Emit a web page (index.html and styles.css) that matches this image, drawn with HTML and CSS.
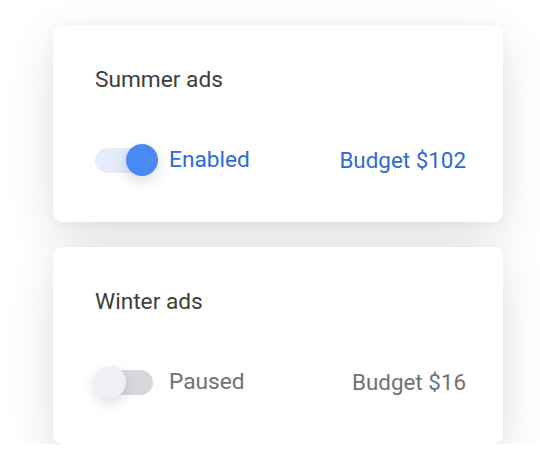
FILE: index.html
```html
<!DOCTYPE html>
<html>
<head>
<meta charset="utf-8">
<link rel="stylesheet" href="styles.css">
</head>
<body>
<div class="list">
  <div class="card">
    <div class="title">Summer ads</div>
    <div class="row">
      <div class="status on">
        <span class="toggle on"><span class="knob"></span></span>
        <span class="label">Enabled</span>
      </div>
      <span class="budget on">Budget $102</span>
    </div>
  </div>
  <div class="card">
    <div class="title">Winter ads</div>
    <div class="row">
      <div class="status off">
        <span class="toggle off"><span class="knob"></span></span>
        <span class="label">Paused</span>
      </div>
      <span class="budget off">Budget $16</span>
    </div>
  </div>
</div>
</body>
</html>
```

FILE: styles.css
```css
html, body {
  margin: 0;
  padding: 0;
  background: #ffffff;
  font-family: Roboto, "Noto Sans", sans-serif;
}
.list {
  display: flex;
  flex-direction: column;
  gap: 25px;
  width: 450px;
  margin-left: 53px;
  padding-top: 25px;
}
.card {
  background: #ffffff;
  border-radius: 9px;
  box-shadow: 0 16px 50px rgba(0, 0, 0, 0.12), 0 2px 12px rgba(0, 0, 0, 0.03);
  padding: 40px 37px 46px 42px;
}
.title {
  font-size: 22.7px;
  line-height: 30px;
  color: #3d3d3d;
}
.row {
  margin-top: 49px;
  height: 32px;
  display: flex;
  align-items: center;
  justify-content: space-between;
}
.status {
  display: flex;
  align-items: center;
  gap: 16px;
}
.label {
  font-size: 22.7px;
  line-height: 32px;
}
.budget {
  font-size: 22.4px;
  line-height: 32px;
}
.on { color: #2b6ad8; }
.off { color: #6d7277; }
.toggle {
  position: relative;
  display: block;
  width: 58px;
  height: 25px;
  border-radius: 13px;
}
.toggle.on { background: linear-gradient(90deg, #e6edfb, #dfe8fb); }
.toggle.off { background: #d6d8dd; }
.knob {
  position: absolute;
  top: -4px;
  width: 32px;
  height: 32px;
  border-radius: 50%;
}
.toggle.on .knob {
  left: 31px;
  background: #4a89f3;
  box-shadow: 0 5px 14px rgba(0, 0, 0, 0.15);
}
.toggle.off .knob {
  left: -1px;
  background: #eef0f4;
  box-shadow: 0 5px 14px rgba(0, 0, 0, 0.13);
}
```
